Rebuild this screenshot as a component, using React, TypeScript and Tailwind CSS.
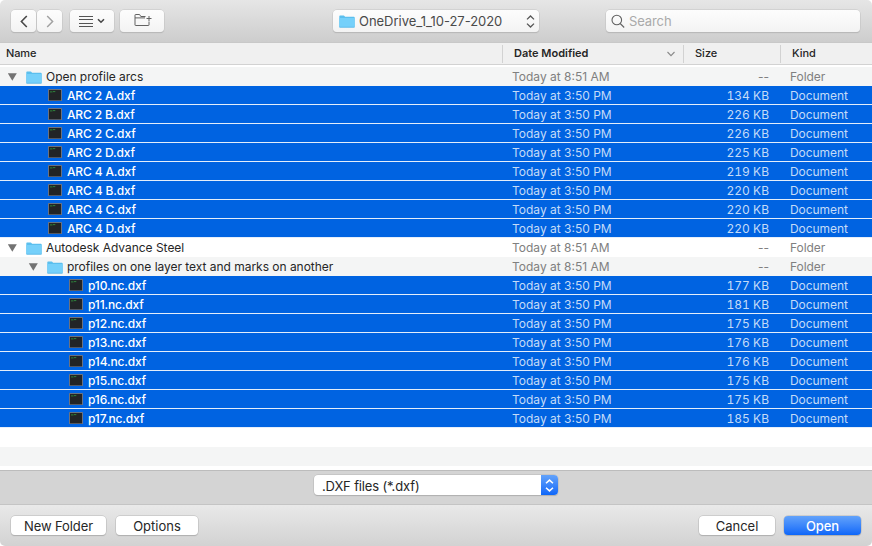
import React from "react";

type Entry = {
  name: string;
  level: number;
  folder?: boolean;
  size?: string;
};

const entries: Entry[] = [
  { name: "Open profile arcs", level: 0, folder: true },
  { name: "ARC 2 A.dxf", level: 1, size: "134 KB" },
  { name: "ARC 2 B.dxf", level: 1, size: "226 KB" },
  { name: "ARC 2 C.dxf", level: 1, size: "226 KB" },
  { name: "ARC 2 D.dxf", level: 1, size: "225 KB" },
  { name: "ARC 4 A.dxf", level: 1, size: "219 KB" },
  { name: "ARC 4 B.dxf", level: 1, size: "220 KB" },
  { name: "ARC 4 C.dxf", level: 1, size: "220 KB" },
  { name: "ARC 4 D.dxf", level: 1, size: "220 KB" },
  { name: "Autodesk Advance Steel", level: 0, folder: true },
  { name: "profiles on one layer text and marks on another", level: 1, folder: true },
  { name: "p10.nc.dxf", level: 2, size: "177 KB" },
  { name: "p11.nc.dxf", level: 2, size: "181 KB" },
  { name: "p12.nc.dxf", level: 2, size: "175 KB" },
  { name: "p13.nc.dxf", level: 2, size: "176 KB" },
  { name: "p14.nc.dxf", level: 2, size: "176 KB" },
  { name: "p15.nc.dxf", level: 2, size: "175 KB" },
  { name: "p16.nc.dxf", level: 2, size: "175 KB" },
  { name: "p17.nc.dxf", level: 2, size: "185 KB" },
];

const indents = ["pl-[7px]", "pl-7", "pl-[49px]"];

function FolderIcon() {
  return (
    <svg width="16" height="13" viewBox="0 0 16 13" className="shrink-0">
      <path d="M.3 1.2Q.3.4 1.1.4H4.6Q5.2.4 5.5.9L6 1.7H14.8Q15.7 1.7 15.7 2.5V11.7Q15.7 12.4 15 12.4H1Q.3 12.4.3 11.7Z" fill="#5bbfee" />
      <path d="M.5 3H15.5V11.6Q15.5 12 15 12H1Q.5 12 .5 11.6Z" fill="#75d0fa" />
      <path d="M.4 12.2H15.6" stroke="#55b5e4" strokeWidth=".6" />
    </svg>
  );
}

function TerminalIcon() {
  return (
    <svg width="14" height="12" viewBox="0 0 14 12" className="shrink-0">
      <rect width="14" height="12" rx=".6" fill="#6b7280" />
      <rect x="1" y="1" width="12" height="10.3" fill="#222426" />
      <path d="M2 2.9H4.5M5 2.6H7.3" stroke="#2f8f3d" strokeWidth=".9" />
    </svg>
  );
}

function Row({ entry, striped }: { entry: Entry; striped: boolean }) {
  const { folder } = entry;
  const tone = folder
    ? striped ? "bg-[#f4f5f5] text-[#262626]" : "bg-white text-[#262626]"
    : "border-b border-[#e4eefb] bg-[#0063e1] text-white";
  const meta = folder ? "text-[#808080]" : "text-[#c4dbf8]";
  return (
    <div className={`flex h-[19px] items-center pt-px text-[12px] leading-[18px] whitespace-nowrap ${tone}`}>
      <div className={`flex w-[512px] shrink-0 items-center ${indents[entry.level]}`}>
        <span className="flex w-[19px] shrink-0">
          {folder && (
            <svg width="10" height="8" viewBox="0 0 10 8">
              <path d="M.8.3H9.8L5.3 7.7Z" fill="#737373" />
            </svg>
          )}
        </span>
        {folder ? <FolderIcon /> : <span className="flex pb-px pl-px"><TerminalIcon /></span>}
        <span className={folder ? "pl-1 tracking-[-0.03px]" : "pl-[5px] font-medium tracking-[-0.15px]"}>{entry.name}</span>
      </div>
      <span className={`w-[171px] shrink-0 ${meta}`}>{folder ? "Today at 8:51 AM" : "Today at 3:50 PM"}</span>
      <span className={`w-[86px] shrink-0 text-right ${folder ? "" : "tabular-nums"} ${meta}`}>{folder ? "--" : entry.size}</span>
      <span className={`pl-[21px] tracking-[-0.05px] ${meta}`}>{folder ? "Folder" : "Document"}</span>
    </div>
  );
}

function ToolButton({ className, children }: { className: string; children: React.ReactNode }) {
  return (
    <button className={`flex h-[22px] items-center justify-center rounded bg-linear-to-b from-[#fdfdfd] to-[#f3f3f3] shadow-[0_0_0_0.5px_#c4c4c4,0_1px_1px_#aaa] ${className}`}>
      {children}
    </button>
  );
}

function PushButton({ className, children }: { className: string; children: React.ReactNode }) {
  return (
    <button className={`h-[19px] rounded-[4px] text-[13px] leading-[20px] shadow-[0_0_0_0.5px_#b8b8b8,0_1px_1px_#a8a8a8] ${className}`}>
      {children}
    </button>
  );
}

export default function App() {
  return (
    <div className="flex h-[546px] w-[872px] flex-col overflow-hidden rounded-[5px] bg-white font-['Inter','Liberation_Sans',sans-serif] text-[#262626]">
      <header className="flex h-[43px] shrink-0 items-start border-b border-[#c8c8c8] bg-linear-to-b from-[#e6e6e6] to-[#cdcdcd] pt-[10px] pl-[11px]">
        <ToolButton className="w-[25px]">
          <svg width="8" height="13" viewBox="0 0 8 13" fill="none" stroke="#484848" strokeWidth="1.6"><path d="M6.8 1 1.4 6.5 6.8 12" /></svg>
        </ToolButton>
        <ToolButton className="ml-px w-[25px]">
          <svg width="8" height="13" viewBox="0 0 8 13" fill="none" stroke="#a2a2a2" strokeWidth="1.5"><path d="M1.2 1 6.6 6.5 1.2 12" /></svg>
        </ToolButton>
        <ToolButton className="ml-2 w-11 gap-1">
          <svg width="14" height="11" viewBox="0 0 14 11" stroke="#555" strokeWidth="1"><path d="M0 .5H14M0 3.5H14M0 7.5H14M0 10.5H14" /></svg>
          <svg width="8" height="6" viewBox="0 0 8 6" fill="none" stroke="#484848" strokeWidth="1.6"><path d="M1 1.2 4 4.2 7 1.2" /></svg>
        </ToolButton>
        <ToolButton className="ml-[6px] w-11">
          <svg width="18" height="14" viewBox="0 0 18 14" fill="none" stroke="#626262" strokeWidth="1" className="mb-[2px] ml-px"><path d="M11.5 3.5H6.8L5.6 1.5H1.5Q1 1.5 1 2V12Q1 12.5 1.5 12.5H14.5Q15 12.5 15 12V8.5M1 4.9H11M15 3V8M12.5 5.5H17.5" /></svg>
        </ToolButton>
        <ToolButton className="ml-[169px] w-[206px]">
          <span className="flex w-full items-center pl-[6px] text-[13px]">
            <FolderIcon />
            <span className="grow pt-px pl-1 text-left tracking-[-0.03px] text-[#4a4a4a]">OneDrive_1_10-27-2020</span>
            <svg width="9" height="13" viewBox="0 0 9 13" fill="none" stroke="#555" strokeWidth="1.3" className="mr-1"><path d="M1 4.4 4.5 1 8 4.4M1 8.6 4.5 12 8 8.6" /></svg>
          </span>
        </ToolButton>
        <div className="ml-[67px] flex h-[22px] w-[254px] items-center rounded bg-linear-to-b from-[#fdfdfd] to-[#f3f3f3] pl-[5px] text-[13px] text-[#aaa] shadow-[0_0_0_0.5px_#c4c4c4,0_1px_1px_#aaa]">
          <svg width="14" height="14" viewBox="0 0 14 14" fill="none" stroke="#606060" strokeWidth="1.1"><circle cx="5.8" cy="6" r="4.8" /><path d="m9.2 9.5 4 4" /></svg>
          <span className="pt-px pl-1 tracking-[-0.1px]">Search</span>
        </div>
      </header>

      <div className="flex h-[22px] shrink-0 items-center border-b border-[#d2d2d2] bg-[#f0f0f0] text-[11px] font-medium">
        <span className="w-[502px] pl-[6px] tracking-[-0.1px]">Name</span>
        <span className="flex h-[18px] w-[181px] items-center justify-between border-l border-[#d2d2d2] pr-2 pl-[11px] font-semibold">
          Date Modified
          <svg width="8" height="6" viewBox="0 0 8 6" fill="none" stroke="#8a8a8a" strokeWidth="1.1" className="mt-px"><path d="M.5 1 4 4.7 7.5 1" /></svg>
        </span>
        <span className="flex h-[18px] w-[97px] items-center border-l border-[#d2d2d2] pl-[11px]">Size</span>
        <span className="flex h-[18px] items-center border-l border-[#d2d2d2] pl-[11px]">Kind</span>
      </div>

      <main className="grow pt-[2px]">
        {entries.map((entry, i) => <Row key={entry.name} entry={entry} striped={i % 2 === 0} />)}
        <div className="h-[19px]" />
        <div className="h-[19px] bg-[#f4f5f5]" />
      </main>

      <div className="flex h-[34px] shrink-0 justify-center border-t border-[#bcbcbc] bg-[#d4d4d4] pt-[4px]">
        <div className="flex h-[20px] w-[244px] overflow-hidden rounded-[4px] bg-white text-[13px] leading-[22px] shadow-[0_0_0_0.5px_#b8b8b8,0_1px_1px_#a8a8a8]">
          <span className="grow pl-[8px] tracking-[-0.15px]">.DXF files (*.dxf)</span>
          <span className="flex w-[17px] items-center justify-center bg-linear-to-b from-[#62a2fa] to-[#0a66f9]">
            <svg width="9" height="13" viewBox="0 0 9 13" fill="none" stroke="white" strokeWidth="1.5"><path d="M1 4.3 4.5 1.1 8 4.3M1 8.7 4.5 11.9 8 8.7" /></svg>
          </span>
        </div>
      </div>

      <footer className="flex h-[42px] shrink-0 border-t border-[#c4c4c4] bg-linear-to-b from-[#e9e9e9] to-[#d2d2d2] pt-[11px] pr-[11px] pl-[11px]">
        <PushButton className="w-[95px] bg-white tracking-[-0.1px]">New Folder</PushButton>
        <PushButton className="ml-[10px] w-[82px] bg-white">Options</PushButton>
        <PushButton className="ml-auto w-[76px] bg-white">Cancel</PushButton>
        <PushButton className="ml-[9px] w-[77px] bg-linear-to-b from-[#62a2fa] to-[#0a66f9] tracking-[-0.1px] font-medium text-white">Open</PushButton>
      </footer>
    </div>
  );
}
